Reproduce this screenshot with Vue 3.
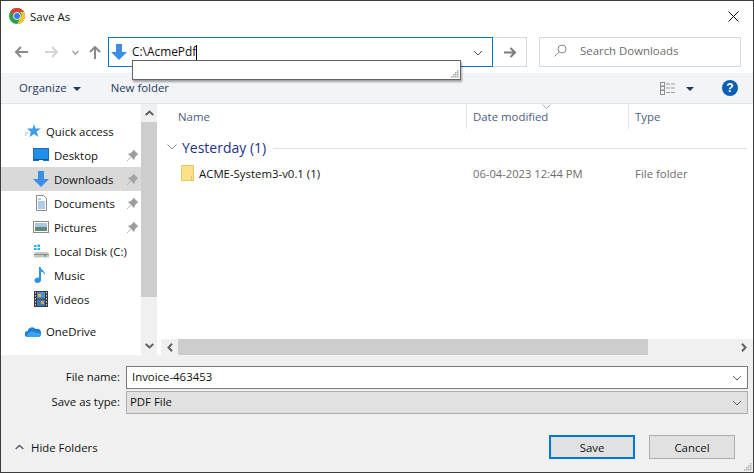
<script setup>
const gripDots = [[6,0],[4,2],[6,2],[2,4],[4,4],[6,4],[0,6],[2,6],[4,6],[6,6]]
</script>

<template>
  <div class="win">
    <div class="title">
      <svg class="chrome" width="16" height="16" viewBox="0 0 16 16">
        <circle cx="8" cy="8" r="8" fill="#2f9e4e"/>
        <path d="M8 0a8 8 0 0 1 6.930 4H8A4 4 0 0 0 4.300 6.500L1.400 3.400A8 8 0 0 1 8 0z" fill="#e0402f"/>
        <path d="M14.930 4A8 8 0 0 1 8 16l3.500-6A4 4 0 0 0 11 4z" fill="#fbc52f"/>
        <circle cx="8" cy="8" r="3.800" fill="#fff"/>
        <circle cx="8" cy="8" r="3" fill="#3b78e7"/>
      </svg>
      <span class="title-text">Save As</span>
      <svg class="close" width="11" height="11" viewBox="0 0 11 11"><path d="M.5.500l10 10M10.500.500l-10 10" stroke="#111" stroke-width="1" fill="none"/></svg>
    </div>

    <div class="nav">
      <svg class="nav-ic back" width="13" height="12" viewBox="0 0 13 12"><path d="M6 1L1 6l5 5M1 6h12" stroke="#8a8a8a" stroke-width="2" fill="none"/></svg>
      <svg class="nav-ic fwd" width="13" height="12" viewBox="0 0 13 12"><path d="M7 1l5 5-5 5M12 6H0" stroke="#d4d4d4" stroke-width="2" fill="none"/></svg>
      <svg class="nav-ic drop" width="7" height="5" viewBox="0 0 7 5"><path d="M.5 1l3 3 3-3" stroke="#9a9a9a" stroke-width="1.300" fill="none"/></svg>
      <svg class="nav-ic up" width="12" height="13" viewBox="0 0 12 13"><path d="M1 6l5-5 5 5M6 1v12" stroke="#8a8a8a" stroke-width="2" fill="none"/></svg>
      <div class="address">
        <svg class="addr-ic" width="16" height="16" viewBox="0 0 16 16"><path d="M5 0h6v8h5l-8 8-8-8h5z" fill="#3a8ee6"/></svg>
        <span class="addr-text">C:\AcmePdf</span><span class="caret"></span>
        <svg class="addr-chev" width="10" height="6" viewBox="0 0 10 6"><path d="M1 1l4 4 4-4" stroke="#555" stroke-width="1" fill="none"/></svg>
        <div class="suggest">
          <svg class="suggest-grip" width="8" height="8" viewBox="0 0 8 8"><rect v-for="d in gripDots" :key="d.join()" :x="d[0]" :y="d[1]" width="1.500" height="1.500" fill="#a8a8a8"/></svg>
        </div>
      </div>
      <div class="go">
        <svg width="12" height="11" viewBox="0 0 12 11"><path d="M6.500 1l4.500 4.500L6.500 10M11 5.500H0" stroke="#7d7d7d" stroke-width="2" fill="none"/></svg>
      </div>
      <div class="search">
        <svg width="13" height="13" viewBox="0 0 13 13"><circle cx="8" cy="5" r="4" stroke="#8a8a8a" fill="none"/><path d="M5 8l-4.500 4.500" stroke="#b08a8a" fill="none"/></svg>
        <span>Search Downloads</span>
      </div>
    </div>

    <div class="toolbar">
      <span class="tool organize">Organize</span>
      <i class="tri"></i>
      <span class="tool newf">New folder</span>
      <svg class="views" width="16" height="13" viewBox="0 0 16 13">
        <g fill="none" stroke="#8e8e8e"><rect x=".5" y=".5" width="4" height="3.500"/><rect x=".5" y="4.500" width="4" height="3.500"/><rect x=".5" y="8.500" width="4" height="4"/></g>
        <path d="M6 2h10M6 6h10M6 10.500h10" stroke="#9a9a9a" stroke-dasharray="4 1" fill="none"/>
      </svg>
      <i class="tri tri2"></i>
      <div class="help">?</div>
    </div>

    <div class="main">
      <aside class="side">
        <div class="tree">
          <div class="row top">
            <svg width="16" height="14" viewBox="0 0 16 14"><path d="M9 0l1.500 4.500H16l-4.300 3 1.600 5.500L9 10l-4.500 3 1.400-5.200L2 4.500h5.500z" fill="#3d9be9"/><path d="M0 9h3M0 11h2" stroke="#8cc7f2"/></svg>
            <span>Quick access</span>
          </div>
          <div class="row">
            <svg width="16" height="14" viewBox="0 0 16 14"><rect x=".5" y=".5" width="15" height="12" fill="#1f8fe8" stroke="#1a6cb5"/><path d="M1 11.500h14" stroke="#0d5a9e"/><path d="M6 12.500h4" stroke="#fff"/></svg>
            <span>Desktop</span>
            <svg class="pin" width="11" height="11" viewBox="0 0 11 11"><path d="M6.500 0L11 4.500 9.500 5 7.500 7.500 7 9.500 1.500 4 3.500 3.500 6 1.500zM3.500 7L0 11" fill="#9c9c9c" stroke="#9c9c9c" stroke-width=".7"/></svg>
          </div>
          <div class="row sel">
            <svg width="16" height="16" viewBox="0 0 16 16"><path d="M5 0h6v8h5l-8 8-8-8h5z" fill="#3a8ee6"/></svg>
            <span>Downloads</span>
            <svg class="pin" width="11" height="11" viewBox="0 0 11 11"><path d="M6.500 0L11 4.500 9.500 5 7.500 7.500 7 9.500 1.500 4 3.500 3.500 6 1.500zM3.500 7L0 11" fill="#a3a3a3" stroke="#a3a3a3" stroke-width=".7"/></svg>
          </div>
          <div class="row">
            <svg width="16" height="16" viewBox="0 0 16 16"><path d="M3.500.500h7l3 3v12h-10z" fill="#fff" stroke="#8a8a8a"/><path d="M5 4h3M5 7h7M5 9h7M5 11h7M5 13h7" stroke="#5b9bd5"/></svg>
            <span>Documents</span>
            <svg class="pin" width="11" height="11" viewBox="0 0 11 11"><path d="M6.500 0L11 4.500 9.500 5 7.500 7.500 7 9.500 1.500 4 3.500 3.500 6 1.500zM3.500 7L0 11" fill="#9c9c9c" stroke="#9c9c9c" stroke-width=".7"/></svg>
          </div>
          <div class="row">
            <svg width="16" height="12" viewBox="0 0 16 12"><rect x=".5" y=".5" width="15" height="11" fill="#fff" stroke="#8a8a8a"/><rect x="2" y="2" width="12" height="4" fill="#a9c6e2"/><rect x="2" y="6" width="12" height="4" fill="#5f8a78"/></svg>
            <span>Pictures</span>
            <svg class="pin" width="11" height="11" viewBox="0 0 11 11"><path d="M6.500 0L11 4.500 9.500 5 7.500 7.500 7 9.500 1.500 4 3.500 3.500 6 1.500zM3.500 7L0 11" fill="#9c9c9c" stroke="#9c9c9c" stroke-width=".7"/></svg>
          </div>
          <div class="row">
            <svg width="16" height="14" viewBox="0 0 16 14"><path d="M1 1h2.500v2H1zM4.500.500H7v2.500H4.500zM1 4h2.500v2H1zM4.500 4H7v2H4.500z" fill="#25b3ec"/><path d="M2 8h12l2 2v3.500H1V10z" fill="#c6c6c6"/><path d="M1 10.500h15" stroke="#8c8c8c"/><rect x="11" y="11" width="2" height="1.500" fill="#3fb94c"/></svg>
            <span>Local Disk (C:)</span>
          </div>
          <div class="row">
            <svg width="16" height="16" viewBox="0 0 16 16"><path d="M6 0h1.500c.3 3 5 3.500 4.500 8.500-.5-2-2.500-3.700-4-4V13c0 1.700-1.500 3-3.500 3S1.500 15 1.500 13.200s2.500-3 4.500-2.600z" fill="#2b92e4"/></svg>
            <span>Music</span>
          </div>
          <div class="row">
            <svg width="16" height="16" viewBox="0 0 16 16"><rect width="14" height="16" x="1" fill="#3a3a3a"/><rect x="4" y="1" width="8" height="6.500" fill="#4a8fd8"/><rect x="4" y="8.500" width="8" height="6.500" fill="#3d78bf"/><rect x="5" y="3" width="3" height="3" fill="#d9b24a"/><rect x="8" y="10" width="3" height="3" fill="#c9a84a"/><path d="M2.500 1v14M13.500 1v14" stroke="#ccc" stroke-dasharray="1.500 1.500"/></svg>
            <span>Videos</span>
          </div>
          <div class="row top onedrive">
            <svg width="16" height="11" viewBox="0 0 16 11"><path d="M3 11A3 3 0 0 1 2.500 5 4.500 4.500 0 0 1 10.500 3 3.500 3.500 0 0 1 13.500 11z" fill="#1b7fd6"/><path d="M3 11a2 2 0 0 1 0-3.500C5 5 9 5 11 7l2.500 0A2 2 0 0 1 14 11z" fill="#3ba3ec"/></svg>
            <span>OneDrive</span>
          </div>
        </div>
        <div class="vbar">
          <svg width="9" height="6" viewBox="0 0 9 6"><path d="M.700 5l3.800-3.500L8.300 5" stroke="#606060" stroke-width="2" fill="none"/></svg>
          <div class="vthumb"></div>
          <div class="vrest"></div>
          <svg width="9" height="6" viewBox="0 0 9 6"><path d="M.700 1l3.800 3.500L8.300 1" stroke="#606060" stroke-width="2" fill="none"/></svg>
        </div>
      </aside>

      <section class="list">
        <div class="heads">
          <span class="h h-name">Name</span>
          <span class="h h-date">Date modified
            <svg class="sort" width="9" height="5" viewBox="0 0 9 5"><path d="M.500.500l4 4 4-4" stroke="#a5a5a5" fill="none"/></svg>
          </span>
          <span class="h h-type">Type</span>
        </div>
        <div class="group">
          <svg width="10" height="6" viewBox="0 0 10 6"><path d="M.500.500L5 5 9.500.500" stroke="#8a8a8a" fill="none"/></svg>
          <span class="group-name">Yesterday (1)</span>
          <span class="group-line"></span>
        </div>
        <div class="file">
          <div class="f-name">
            <svg width="13" height="16" viewBox="0 0 13 16"><path d="M.500.500h12v15H.500z" fill="#fde08a" stroke="#e6c765"/><path d="M10.500 10.500v5" stroke="#e6c765"/></svg>
            <span>ACME-System3-v0.1 (1)</span>
          </div>
          <span class="f-date">06-04-2023 12:44 PM</span>
          <span class="f-type">File folder</span>
        </div>
        <div class="spacer"></div>
        <div class="hbar">
          <svg class="harrow first" width="6" height="9" viewBox="0 0 6 9"><path d="M5 .700L1.500 4.500 5 8.300" stroke="#606060" stroke-width="2" fill="none"/></svg>
          <div class="hthumb"></div>
          <div class="hrest"></div>
          <svg class="harrow" width="6" height="9" viewBox="0 0 6 9"><path d="M1 .700L4.500 4.500 1 8.300" stroke="#606060" stroke-width="2" fill="none"/></svg>
        </div>
      </section>
    </div>

    <div class="bottom">
      <div class="field">
        <label>File name:</label>
        <div class="input">
          <span>Invoice-463453</span>
          <svg width="10" height="6" viewBox="0 0 10 6"><path d="M1 1l4 4 4-4" stroke="#666" fill="none"/></svg>
        </div>
      </div>
      <div class="field second">
        <label>Save as type:</label>
        <div class="input type">
          <span>PDF File</span>
          <svg width="10" height="6" viewBox="0 0 10 6"><path d="M1 1l4 4 4-4" stroke="#666" fill="none"/></svg>
        </div>
      </div>
      <div class="actions">
        <div class="hide">
          <svg width="9" height="6" viewBox="0 0 9 6"><path d="M.700 5l3.800-3.500L8.300 5" stroke="#606060" stroke-width="1.600" fill="none"/></svg>
          <span>Hide Folders</span>
        </div>
        <button class="btn primary">Save</button>
        <button class="btn">Cancel</button>
      </div>
      <svg class="grip" width="8" height="8" viewBox="0 0 8 8"><rect v-for="d in gripDots" :key="d.join()" :x="d[0]" :y="d[1]" width="1.500" height="1.500" fill="#b5b5b5"/></svg>
    </div>
  </div>
</template>

<style scoped>
.win { position: relative; width: 754px; height: 473px; box-sizing: border-box; border: 1px solid #3c3c3c; background: #fff; display: flex; flex-direction: column; font-family: "Open Sans", "Noto Sans", sans-serif; font-size: 11.4px; color: #111; overflow: hidden; }
.title { height: 30px; flex: none; display: flex; align-items: center; padding-left: 8px; padding-right: 14px; }
.chrome { flex: none; }
.title-text { margin-left: 5px; }
.close { margin-left: auto; }
.nav { height: 42px; flex: none; display: flex; align-items: center; }
.nav-ic { flex: none; }
.back { margin-left: 14px; }
.fwd { margin-left: 17px; }
.drop { margin-left: 14px; }
.up { margin-left: 10px; }
.address { position: relative; margin-left: 7px; width: 385px; height: 30px; box-sizing: border-box; border: 1px solid #0078d7; display: flex; align-items: center; padding-left: 2px; }
.addr-text { margin-left: 5px; position: relative; top: -1px; font-size: 11.9px; }
.caret { width: 1px; height: 15px; background: #000; margin-top: 1px; }
.addr-chev { margin-left: auto; margin-right: 9px; margin-top: 2px; }
.suggest { position: absolute; left: 23px; top: 22px; width: 329px; height: 20px; box-sizing: border-box; border: 1px solid #646464; background: #fff; box-shadow: 1px 2px 2px rgba(0,0,0,.35); z-index: 3; }
.suggest-grip { position: absolute; right: 1px; bottom: 1px; }
.go { width: 34px; height: 30px; box-sizing: border-box; border: 1px solid #d9d9d9; border-left: none; display: flex; align-items: center; justify-content: center; }
.search { margin-left: 12px; width: 202px; height: 30px; box-sizing: border-box; border: 1px solid #d9d9d9; display: flex; align-items: center; padding: 0 0 3px 14px; gap: 13px; color: #6d6d6d; }
.toolbar { height: 31px; flex: none; box-sizing: border-box; background: #f2f4f7; border-bottom: 1px solid #e3e5e8; display: flex; align-items: center; color: #1e3a5a; }
.tool { position: relative; top: -1px; }
.organize { margin-left: 18px; }
.tri { width: 0; height: 0; border-left: 4px solid transparent; border-right: 4px solid transparent; border-top: 4px solid #1e3a5a; margin-left: 6px; margin-top: 1px; }
.newf { margin-left: 30px; }
.views { margin-left: auto; }
.tri2 { margin-left: 10px; margin-right: 28px; }
.help { width: 16px; height: 16px; border-radius: 50%; background: #0a5fb4; color: #fff; font-weight: 700; font-size: 12px; line-height: 16px; text-align: center; margin-right: 15px; font-family: "Liberation Sans", sans-serif; }
.main { flex: 1; min-height: 0; display: flex; }
.side { width: 156px; flex: none; display: flex; }
.tree { width: 140px; flex: none; padding-top: 15px; box-sizing: border-box; }
.row { height: 24px; display: flex; align-items: center; position: relative; padding-left: 32px; }
.row > svg:first-child { flex: none; margin-right: 5px; }
.row.top { padding-left: 24px; }
.row.sel { background: #d9d9d9; }
.onedrive { margin-top: 8px; }
.pin { position: absolute; left: 126px; top: 7px; }
.vbar { width: 16px; flex: none; background: #f0f0f0; display: flex; flex-direction: column; align-items: center; }
.vbar > svg { flex: none; margin: 6px 0; }
.vthumb { width: 16px; height: 175px; background: #cdcdcd; flex: none; }
.vrest { flex: 1; }
.list { flex: 1; min-width: 0; margin-left: 3px; display: flex; flex-direction: column; border-left: 1px solid #fff; }
.heads { height: 25px; flex: none; display: flex; color: #4c607a; }
.h { position: relative; display: flex; align-items: center; box-sizing: border-box; padding-left: 6px; height: 25px; }
.h-name { width: 306px; padding-left: 17px; border-right: 1px solid #e5e5e5; }
.h-date { width: 162px; border-right: 1px solid #e5e5e5; }
.h-type { flex: 1; }
.sort { position: absolute; left: 75px; top: 0; }
.group { height: 28px; flex: none; margin-top: 4px; display: flex; align-items: center; padding-left: 6px; box-sizing: border-box; }
.group-name { font-size: 14px; color: #1e3287; margin-left: 5px; }
.group-line { flex: 1; height: 1px; background: #e2e2e2; margin: 2px 6px 0 7px; }
.file { height: 22px; flex: none; display: flex; align-items: center; margin-top: 1px; }
.f-name { width: 312px; display: flex; align-items: center; gap: 5px; padding-left: 20px; box-sizing: border-box; }
.f-date { width: 162px; color: #6d6d6d; font-size: 11.2px; }
.f-type { color: #6d6d6d; }
.spacer { flex: 1; }
.hbar { height: 16px; flex: none; background: #f0f0f0; display: flex; align-items: center; }
.harrow { flex: none; margin: 0 6px; }
.harrow.first { margin-right: 5px; }
.hthumb { width: 470px; height: 16px; background: #cdcdcd; flex: none; }
.hrest { flex: 1; }
.bottom { height: 117px; flex: none; background: #f0f0f0; position: relative; box-sizing: border-box; padding-top: 11px; }
.field { display: flex; align-items: center; height: 23px; }
.field.second { margin-top: 2px; }
.field label { width: 119px; text-align: right; flex: none; position: relative; top: -1px; }
.input { margin-left: 6px; width: 622px; height: 23px; box-sizing: border-box; border: 1px solid #7a7a7a; background: #fff; display: flex; align-items: center; justify-content: space-between; padding: 0 5px; }
.input > span { position: relative; top: -1px; }
.input.type { background: #e1e1e1; border-color: #adadad; padding-left: 3px; }
.actions { display: flex; align-items: center; margin-top: 21px; }
.hide { display: flex; align-items: center; gap: 7px; margin-left: 14px; margin-right: auto; }
.btn { width: 86px; height: 24px; box-sizing: border-box; border: 1px solid #adadad; background: #e1e1e1; font: inherit; color: #111; padding: 0; margin-right: 18px; }
.btn.primary { border: 2px solid #0078d7; margin-right: 14px; }
.grip { position: absolute; right: 1px; bottom: 1px; }
</style>

<style>
body { margin: 0; }
</style>
